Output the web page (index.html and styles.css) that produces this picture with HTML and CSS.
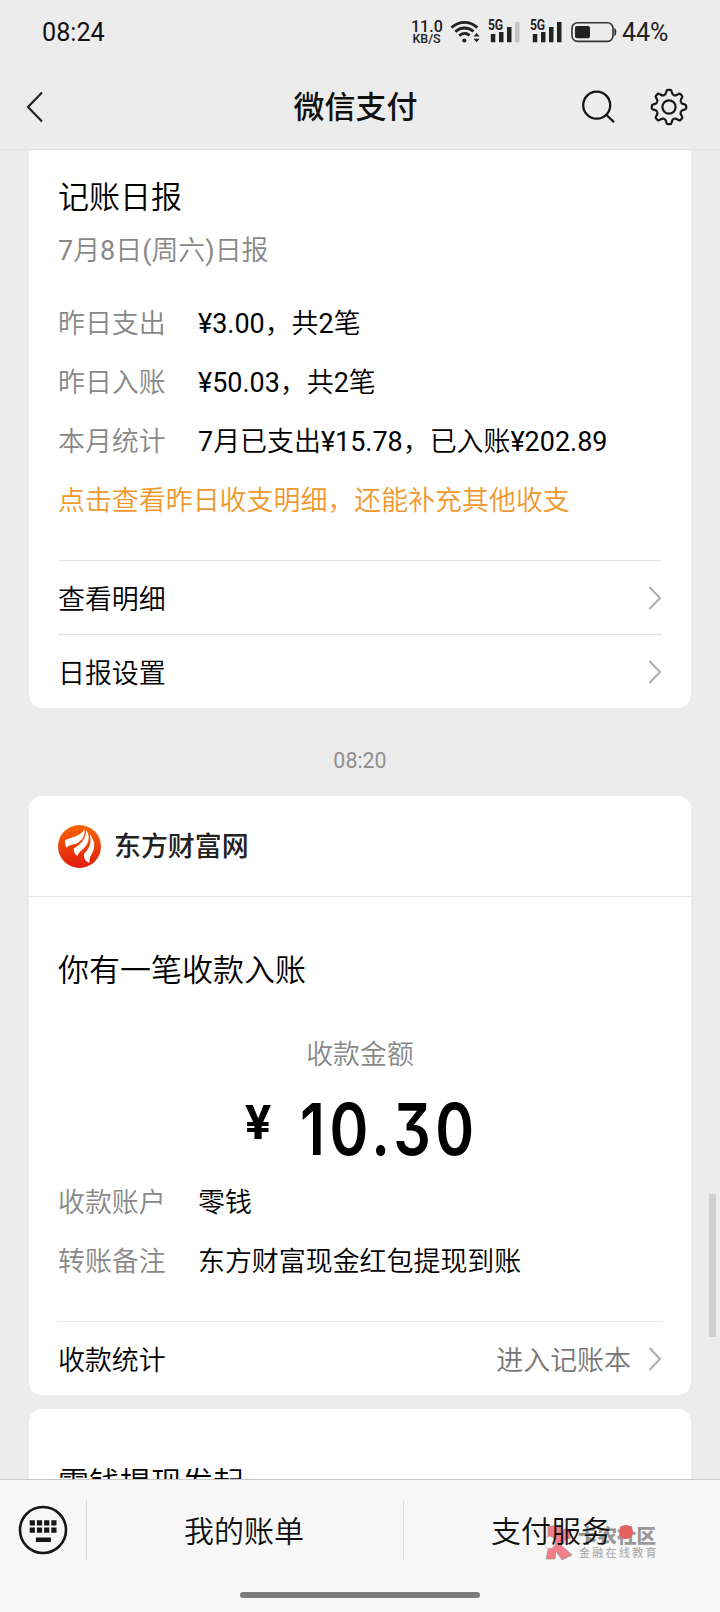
FILE: index.html
```html
<!DOCTYPE html>
<html lang="zh-CN">
<head>
<meta charset="utf-8">
<title>微信支付</title>
<link rel="stylesheet" href="styles.css">
</head>
<body>
<div class="screen">
  <header class="top">
    <div class="status">
      <span class="clock">08:24</span>
      <span class="speed"><b>11.0</b><i>KB/S</i></span>
      <svg class="wifi" width="32" height="24" viewBox="0 0 32 24" fill="none" stroke="#222" stroke-width="2.9">
        <path d="M1.5 7.6C9 .6 20 .6 27.300 7.600M5.300 11.800C10.500 6.800 18.500 6.800 23.500 11.500M9.200 15.800C12.500 12.800 16.500 12.800 19.500 15.500"/>
        <circle cx="14.300" cy="20.500" r="2.100" fill="#222" stroke="none"/>
        <path d="M23.500 16.500L26.600 13l3.100 3.500zM23.500 18.800l3.100 3.500 3.100-3.500z" fill="#222" stroke="none"/>
      </svg>
      <span class="signal"><em>5G</em>
        <svg width="32" height="24" viewBox="0 0 32 24" fill="#222"><path d="M2.800 14h4.500v8.300H2.800zM11 12h4.500v10.300H11zM19 7h4.500v15.300H19z"/><path d="M27 2h4.500v20.300H27z" fill="#c4c4c4"/></svg>
      </span>
      <span class="signal second"><em>5G</em>
        <svg width="32" height="24" viewBox="0 0 32 24" fill="#222"><path d="M2.800 14h4.500v8.300H2.800zM11 12h4.500v10.300H11zM19 7h4.500v15.300H19zM27 2h4.500v20.300H27z"/></svg>
      </span>
      <svg class="battery" width="46" height="22" viewBox="0 0 46 22"><rect x="1" y="1.800" width="41" height="18.600" rx="5.500" fill="none" stroke="#333" stroke-width="1.600"/><rect x="4" y="5" width="15" height="12.300" rx="2" fill="#222"/><path d="M43.300 7q2 .5 2 4t-2 4z" fill="#333"/></svg>
      <span class="percent">44%</span>
    </div>
    <nav class="nav">
      <svg class="back" width="20" height="34" viewBox="0 0 20 34" fill="none" stroke="#222" stroke-width="2.200"><path d="M17 2.500L3 17l14 14.500"/></svg>
      <h1>微信支付</h1>
      <svg class="search" width="36" height="36" viewBox="0 0 36 36" fill="none" stroke="#161616" stroke-width="2.300"><circle cx="16.700" cy="16.200" r="13.500"/><path d="M26 25.500l8 7.700"/></svg>
      <svg class="gear" width="38" height="38" viewBox="-19 -19 38 38" fill="none" stroke="#161616" stroke-width="2.200">
        <defs><path id="tooth" d="M-4.900-11.800C-3.600-12.350-3.200-13-2.900-14.400L-2.600-15.700Q-2.300-17.200-1-17.200H1Q2.300-17.200 2.600-15.700L2.900-14.400C3.200-13 3.600-12.350 4.900-11.800"/></defs>
        <use href="#tooth"/><use href="#tooth" transform="rotate(45)"/><use href="#tooth" transform="rotate(90)"/><use href="#tooth" transform="rotate(135)"/><use href="#tooth" transform="rotate(180)"/><use href="#tooth" transform="rotate(225)"/><use href="#tooth" transform="rotate(270)"/><use href="#tooth" transform="rotate(315)"/>
        <circle r="6.600"/>
      </svg>
    </nav>
  </header>

  <main class="feed">
    <section class="card report">
      <h2>记账日报</h2>
      <p class="sub"><span class="n">7</span>月<span class="n">8</span>日<span class="n">(</span>周六<span class="n">)</span>日报</p>
      <dl class="rows">
        <dt>昨日支出</dt><dd><span class="n">¥3.00</span>，共<span class="n">2</span>笔</dd>
        <dt>昨日入账</dt><dd><span class="n">¥50.03</span>，共<span class="n">2</span>笔</dd>
        <dt>本月统计</dt><dd><span class="n">7</span>月已支出<span class="n">¥15.78</span>，已入账<span class="n">¥202.89</span></dd>
      </dl>
      <p class="tip">点击查看昨日收支明细，还能补充其他收支</p>
      <div class="link"><span>查看明细</span><svg class="chev" width="14" height="26" viewBox="0 0 14 26"><path d="M1.500 2L12 13 1.500 24"/></svg></div>
      <div class="link"><span>日报设置</span><svg class="chev" width="14" height="26" viewBox="0 0 14 26"><path d="M1.500 2L12 13 1.500 24"/></svg></div>
    </section>

    <time class="stamp">08:20</time>

    <section class="card payment">
      <div class="merchant">
        <svg width="43" height="43" viewBox="0 0 43 43">
          <defs><linearGradient id="brand" x2="0" y2="1"><stop offset="0" stop-color="#fb6500"/><stop offset="1" stop-color="#e01c12"/></linearGradient></defs>
          <circle cx="21.500" cy="21.500" r="21.500" fill="url(#brand)"/>
          <path fill="#fff" d="M7 15.500C12 12 21 12.500 26.500 4.500C27.500 12 22 18.500 15 19.500C12 20 10 21 8.500 22.800C7.300 20.500 6.700 18 7 15.500zM28 5C33.500 12 30 20 24.500 24.500C21.500 27 20.200 28.500 19.500 31C16.500 29.500 15.500 26.500 15.800 23.500C21 20.500 28 15.500 28 5zM31.500 9C38 16 37 24 33.500 29.500C31.500 32.500 31.300 35 31.500 38C27.500 36.500 25.500 33 26 29C31 24 34.500 17 31.500 9z"/>
        </svg>
        <strong>东方财富网</strong>
      </div>
      <div class="body">
        <h2>你有一笔收款入账</h2>
        <p class="label">收款金额</p>
        <p class="amount"><span class="yen">¥</span><span class="number">10.30</span></p>
        <dl class="rows">
          <dt>收款账户</dt><dd>零钱</dd>
          <dt>转账备注</dt><dd>东方财富现金红包提现到账</dd>
        </dl>
        <div class="link"><span>收款统计</span><span class="more">进入记账本</span><svg class="chev" width="14" height="26" viewBox="0 0 14 26"><path d="M1.500 2L12 13 1.500 24"/></svg></div>
      </div>
    </section>

    <section class="card next"><h2>零钱提现发起</h2></section>
    <div class="scrollbar"></div>
  </main>

  <footer class="bottom">
    <div class="watermark">
      <svg width="32" height="36" viewBox="0 0 32 36"><path fill="#f25563" stroke="#777" stroke-width=".7" d="M6 1h13v9l3-6 7 1-1 10-9 5 11 10-10 5-6-9-1 8H4l2-9z"/><circle cx="7.500" cy="17.500" r="6" fill="#f7f7f7" stroke="#999" stroke-width=".6"/><circle cx="26.500" cy="18" r="4" fill="#f7f7f7"/></svg>
      <div class="words"><b>卡农社区</b><span>金融在线教育</span></div>
      <i class="dot"></i>
    </div>
    <div class="menu">
      <div class="keyboard">
        <svg width="50" height="50" viewBox="0 0 50 50"><circle cx="25" cy="25" r="23" fill="none" stroke="#161616" stroke-width="2.600"/><path fill="#161616" d="M11.700 15.300h5.200v5.200h-5.200zm7.200 0h5.200v5.200h-5.200zm7.200 0h5.200v5.200h-5.200zm7.200 0h5.200v5.200h-5.200zM11.700 22.500h5.200v5.200h-5.200zm7.200 0h5.200v5.200h-5.200zm7.200 0h5.200v5.200h-5.200zm7.200 0h5.200v5.200h-5.200zM17.900 32.500h15v4.500h-15z"/></svg>
      </div>
      <div class="item">我的账单</div>
      <div class="item service">支付服务</div>
    </div>
    <div class="home"></div>
  </footer>
</div>
</body>
</html>
```

FILE: styles.css
```css
* { box-sizing: border-box; }
body { margin: 0; }
h1, h2, p, dl, dd { margin: 0; font-weight: inherit; }
svg { display: block; flex: none; }

.screen {
  width: 720px;
  height: 1612px;
  display: flex;
  flex-direction: column;
  overflow: hidden;
  background: #ececec;
  color: #000;
  font: 350 26.950px/59px Roboto, "Noto Sans CJK SC", sans-serif;
}
.n { font-weight: 400; }

.top { height: 150px; flex: none; border-bottom: 1px solid #e2e2e2; }
.status { display: flex; align-items: center; height: 64px; padding-left: 42px; font-weight: 400; line-height: 30px; }
.clock { width: 369px; padding-top: 2px; font-size: 25.200px; color: #111; }
.speed { width: 31px; font-weight: 500; color: #222; text-align: center; }
.speed b, .speed i { display: block; font-style: normal; font-weight: 500; white-space: nowrap; }
.speed b { font-size: 16px; line-height: 13px; }
.speed i { font-size: 12.500px; line-height: 12px; }
.wifi { margin-left: 8px; }
.signal { position: relative; width: 32px; margin-left: 6px; }
.signal.second { margin-left: 10px; }
.signal em { position: absolute; left: 0; top: 0; font: 700 14.500px/12px Roboto, sans-serif; color: #222; background: #ececec; letter-spacing: -.3px; transform: scaleX(.84); transform-origin: left; }
.battery { margin-left: 9px; }
.percent { margin-left: 5px; padding-top: 2px; font-size: 25px; color: #222; }

.nav { display: flex; align-items: center; height: 86px; padding-left: 25px; }
.nav h1 { width: 535px; padding-left: 86px; text-align: center; font-size: 31px; font-weight: 500; color: #111; }
.gear { margin-left: 34px; }

.feed { position: relative; flex: none; height: 1329px; overflow: hidden; padding: 0 29px; }
.card { background: #fff; border-radius: 13px; }
.card h2 { font-size: 31px; line-height: 46px; }
.report { height: 558px; padding: 25px 29px 0; border-radius: 0 0 13px 13px; }
.sub { margin-top: 7px; line-height: 46px; color: #888; }
.rows { display: grid; grid-template-columns: 140px 1fr; }
.report .rows { margin-top: 21px; }
.rows dt { color: #888; }
.tip { color: #f0982e; height: 88px; }
.link { display: flex; align-items: center; height: 74px; line-height: 60px; border-top: 1px solid #e3e3e3; }
.link span { padding-top: 4px; }
.link span:first-child { flex: 1; }
.more { color: #777; margin-right: 17px; }
.chev { fill: none; stroke: #b0b0b0; stroke-width: 2.200; }
.stamp { display: block; height: 88px; padding-top: 14px; line-height: 78px; text-align: center; font-size: 21.400px; font-weight: 400; color: #8e8e8e; }
.payment { height: 599px; }
.merchant { display: flex; align-items: center; gap: 13px; height: 101px; padding-left: 29px; border-bottom: 1px solid #e6e6e6; }
.merchant strong { padding-top: 3px; font-weight: 500; color: #222; }
.body { padding: 51px 29px 0; }
.label { margin-top: 38px; line-height: 46px; text-align: center; color: #888; }
.amount { display: flex; height: 96px; color: #000; }
.yen { width: 55px; margin-left: 187px; font: 700 49px/90px Roboto, sans-serif; }
.number { font: 600 71px/102px Inter, sans-serif; font-feature-settings: "cv09"; letter-spacing: 5.500px; transform: scaleX(.83); transform-origin: left; }
.body .rows { height: 147px; align-content: start; }
.next { margin-top: 14px; height: 150px; padding: 52px 29px; }
.scrollbar { position: absolute; left: 709px; top: 1044px; width: 7px; height: 143px; background: #cfcfcf; }

.bottom { position: relative; flex: none; height: 133px; background: #f7f7f7; border-top: 1px solid #c8c8c8; }
.menu { position: relative; display: flex; padding-top: 20px; font-size: 30px; color: #111; }
.keyboard { width: 86px; height: 60px; padding: 5px 0 0 18px; }
.item { width: 317px; height: 60px; line-height: 64px; text-align: center; border-left: 1px solid #dcdcdc; }
.item:nth-child(2) { padding-right: 2px; }
.service { padding-right: 22px; }
.home { width: 240px; height: 6px; margin: 32px auto 0; border-radius: 3px; background: #7b7b7b; }
.watermark { position: absolute; left: 542px; top: 45px; display: flex; opacity: .75; }
.words { margin-left: 4px; color: #777; }
.words b { display: block; font: 900 19.500px/20px "Noto Sans CJK SC", sans-serif; }
.words span { display: block; margin-left: 1px; font: 500 11px/15px "Noto Sans CJK SC", sans-serif; letter-spacing: 2.300px; color: #999; }
.dot { position: absolute; left: 77px; top: 0; width: 14px; height: 14px; border-radius: 50%; background: #e22b2b; }
```
